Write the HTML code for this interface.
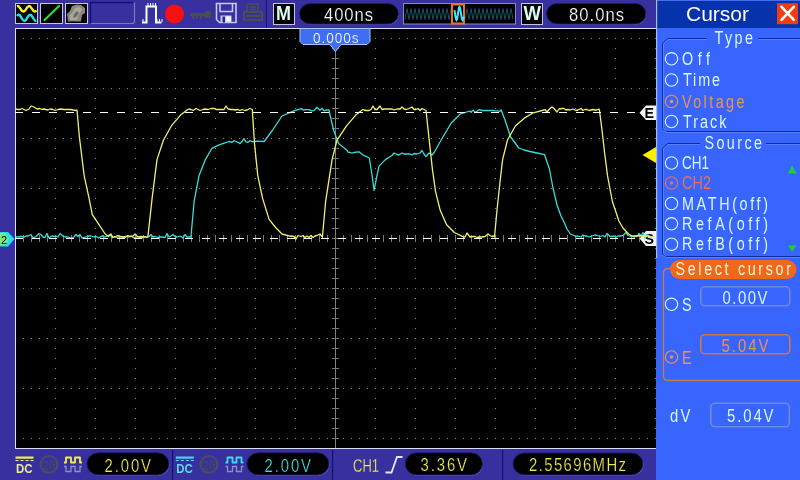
<!DOCTYPE html>
<html><head><meta charset="utf-8"><title>Scope</title>
<style>html,body{margin:0;padding:0;background:#000;}body{width:800px;height:480px;overflow:hidden;font-family:"Liberation Sans",sans-serif;}svg{display:block;}</style>
</head><body>
<svg style="will-change:transform" width="800" height="480" viewBox="0 0 800 480">
<rect x="0" y="0" width="656" height="480" fill="#37309e"/>
<rect x="15" y="28" width="641" height="421" fill="#000"/>
<rect x="15" y="28" width="641" height="1" fill="#dcdcff"/>
<rect x="15" y="448" width="641" height="1" fill="#dcdcff"/>
<rect x="15" y="28" width="1" height="421" fill="#dcdcff"/>
<path d="M23 38h1v1h-1zM31 38h1v1h-1zM39 38h1v1h-1zM47 38h1v1h-1zM55 38h1v1h-1zM63 38h1v1h-1zM71 38h1v1h-1zM79 38h1v1h-1zM87 38h1v1h-1zM95 38h1v1h-1zM103 38h1v1h-1zM111 38h1v1h-1zM119 38h1v1h-1zM127 38h1v1h-1zM135 38h1v1h-1zM143 38h1v1h-1zM151 38h1v1h-1zM159 38h1v1h-1zM167 38h1v1h-1zM175 38h1v1h-1zM183 38h1v1h-1zM191 38h1v1h-1zM199 38h1v1h-1zM207 38h1v1h-1zM215 38h1v1h-1zM223 38h1v1h-1zM231 38h1v1h-1zM239 38h1v1h-1zM247 38h1v1h-1zM255 38h1v1h-1zM263 38h1v1h-1zM271 38h1v1h-1zM279 38h1v1h-1zM287 38h1v1h-1zM295 38h1v1h-1zM303 38h1v1h-1zM311 38h1v1h-1zM319 38h1v1h-1zM327 38h1v1h-1zM335 38h1v1h-1zM343 38h1v1h-1zM351 38h1v1h-1zM359 38h1v1h-1zM367 38h1v1h-1zM375 38h1v1h-1zM383 38h1v1h-1zM391 38h1v1h-1zM399 38h1v1h-1zM407 38h1v1h-1zM415 38h1v1h-1zM423 38h1v1h-1zM431 38h1v1h-1zM439 38h1v1h-1zM447 38h1v1h-1zM455 38h1v1h-1zM463 38h1v1h-1zM471 38h1v1h-1zM479 38h1v1h-1zM487 38h1v1h-1zM495 38h1v1h-1zM503 38h1v1h-1zM511 38h1v1h-1zM519 38h1v1h-1zM527 38h1v1h-1zM535 38h1v1h-1zM543 38h1v1h-1zM551 38h1v1h-1zM559 38h1v1h-1zM567 38h1v1h-1zM575 38h1v1h-1zM583 38h1v1h-1zM591 38h1v1h-1zM599 38h1v1h-1zM607 38h1v1h-1zM615 38h1v1h-1zM623 38h1v1h-1zM631 38h1v1h-1zM639 38h1v1h-1zM647 38h1v1h-1zM655 38h1v1h-1zM23 88h1v1h-1zM31 88h1v1h-1zM39 88h1v1h-1zM47 88h1v1h-1zM55 88h1v1h-1zM63 88h1v1h-1zM71 88h1v1h-1zM79 88h1v1h-1zM87 88h1v1h-1zM95 88h1v1h-1zM103 88h1v1h-1zM111 88h1v1h-1zM119 88h1v1h-1zM127 88h1v1h-1zM135 88h1v1h-1zM143 88h1v1h-1zM151 88h1v1h-1zM159 88h1v1h-1zM167 88h1v1h-1zM175 88h1v1h-1zM183 88h1v1h-1zM191 88h1v1h-1zM199 88h1v1h-1zM207 88h1v1h-1zM215 88h1v1h-1zM223 88h1v1h-1zM231 88h1v1h-1zM239 88h1v1h-1zM247 88h1v1h-1zM255 88h1v1h-1zM263 88h1v1h-1zM271 88h1v1h-1zM279 88h1v1h-1zM287 88h1v1h-1zM295 88h1v1h-1zM303 88h1v1h-1zM311 88h1v1h-1zM319 88h1v1h-1zM327 88h1v1h-1zM335 88h1v1h-1zM343 88h1v1h-1zM351 88h1v1h-1zM359 88h1v1h-1zM367 88h1v1h-1zM375 88h1v1h-1zM383 88h1v1h-1zM391 88h1v1h-1zM399 88h1v1h-1zM407 88h1v1h-1zM415 88h1v1h-1zM423 88h1v1h-1zM431 88h1v1h-1zM439 88h1v1h-1zM447 88h1v1h-1zM455 88h1v1h-1zM463 88h1v1h-1zM471 88h1v1h-1zM479 88h1v1h-1zM487 88h1v1h-1zM495 88h1v1h-1zM503 88h1v1h-1zM511 88h1v1h-1zM519 88h1v1h-1zM527 88h1v1h-1zM535 88h1v1h-1zM543 88h1v1h-1zM551 88h1v1h-1zM559 88h1v1h-1zM567 88h1v1h-1zM575 88h1v1h-1zM583 88h1v1h-1zM591 88h1v1h-1zM599 88h1v1h-1zM607 88h1v1h-1zM615 88h1v1h-1zM623 88h1v1h-1zM631 88h1v1h-1zM639 88h1v1h-1zM647 88h1v1h-1zM655 88h1v1h-1zM23 138h1v1h-1zM31 138h1v1h-1zM39 138h1v1h-1zM47 138h1v1h-1zM55 138h1v1h-1zM63 138h1v1h-1zM71 138h1v1h-1zM79 138h1v1h-1zM87 138h1v1h-1zM95 138h1v1h-1zM103 138h1v1h-1zM111 138h1v1h-1zM119 138h1v1h-1zM127 138h1v1h-1zM135 138h1v1h-1zM143 138h1v1h-1zM151 138h1v1h-1zM159 138h1v1h-1zM167 138h1v1h-1zM175 138h1v1h-1zM183 138h1v1h-1zM191 138h1v1h-1zM199 138h1v1h-1zM207 138h1v1h-1zM215 138h1v1h-1zM223 138h1v1h-1zM231 138h1v1h-1zM239 138h1v1h-1zM247 138h1v1h-1zM255 138h1v1h-1zM263 138h1v1h-1zM271 138h1v1h-1zM279 138h1v1h-1zM287 138h1v1h-1zM295 138h1v1h-1zM303 138h1v1h-1zM311 138h1v1h-1zM319 138h1v1h-1zM327 138h1v1h-1zM335 138h1v1h-1zM343 138h1v1h-1zM351 138h1v1h-1zM359 138h1v1h-1zM367 138h1v1h-1zM375 138h1v1h-1zM383 138h1v1h-1zM391 138h1v1h-1zM399 138h1v1h-1zM407 138h1v1h-1zM415 138h1v1h-1zM423 138h1v1h-1zM431 138h1v1h-1zM439 138h1v1h-1zM447 138h1v1h-1zM455 138h1v1h-1zM463 138h1v1h-1zM471 138h1v1h-1zM479 138h1v1h-1zM487 138h1v1h-1zM495 138h1v1h-1zM503 138h1v1h-1zM511 138h1v1h-1zM519 138h1v1h-1zM527 138h1v1h-1zM535 138h1v1h-1zM543 138h1v1h-1zM551 138h1v1h-1zM559 138h1v1h-1zM567 138h1v1h-1zM575 138h1v1h-1zM583 138h1v1h-1zM591 138h1v1h-1zM599 138h1v1h-1zM607 138h1v1h-1zM615 138h1v1h-1zM623 138h1v1h-1zM631 138h1v1h-1zM639 138h1v1h-1zM647 138h1v1h-1zM655 138h1v1h-1zM23 188h1v1h-1zM31 188h1v1h-1zM39 188h1v1h-1zM47 188h1v1h-1zM55 188h1v1h-1zM63 188h1v1h-1zM71 188h1v1h-1zM79 188h1v1h-1zM87 188h1v1h-1zM95 188h1v1h-1zM103 188h1v1h-1zM111 188h1v1h-1zM119 188h1v1h-1zM127 188h1v1h-1zM135 188h1v1h-1zM143 188h1v1h-1zM151 188h1v1h-1zM159 188h1v1h-1zM167 188h1v1h-1zM175 188h1v1h-1zM183 188h1v1h-1zM191 188h1v1h-1zM199 188h1v1h-1zM207 188h1v1h-1zM215 188h1v1h-1zM223 188h1v1h-1zM231 188h1v1h-1zM239 188h1v1h-1zM247 188h1v1h-1zM255 188h1v1h-1zM263 188h1v1h-1zM271 188h1v1h-1zM279 188h1v1h-1zM287 188h1v1h-1zM295 188h1v1h-1zM303 188h1v1h-1zM311 188h1v1h-1zM319 188h1v1h-1zM327 188h1v1h-1zM335 188h1v1h-1zM343 188h1v1h-1zM351 188h1v1h-1zM359 188h1v1h-1zM367 188h1v1h-1zM375 188h1v1h-1zM383 188h1v1h-1zM391 188h1v1h-1zM399 188h1v1h-1zM407 188h1v1h-1zM415 188h1v1h-1zM423 188h1v1h-1zM431 188h1v1h-1zM439 188h1v1h-1zM447 188h1v1h-1zM455 188h1v1h-1zM463 188h1v1h-1zM471 188h1v1h-1zM479 188h1v1h-1zM487 188h1v1h-1zM495 188h1v1h-1zM503 188h1v1h-1zM511 188h1v1h-1zM519 188h1v1h-1zM527 188h1v1h-1zM535 188h1v1h-1zM543 188h1v1h-1zM551 188h1v1h-1zM559 188h1v1h-1zM567 188h1v1h-1zM575 188h1v1h-1zM583 188h1v1h-1zM591 188h1v1h-1zM599 188h1v1h-1zM607 188h1v1h-1zM615 188h1v1h-1zM623 188h1v1h-1zM631 188h1v1h-1zM639 188h1v1h-1zM647 188h1v1h-1zM655 188h1v1h-1zM23 288h1v1h-1zM31 288h1v1h-1zM39 288h1v1h-1zM47 288h1v1h-1zM55 288h1v1h-1zM63 288h1v1h-1zM71 288h1v1h-1zM79 288h1v1h-1zM87 288h1v1h-1zM95 288h1v1h-1zM103 288h1v1h-1zM111 288h1v1h-1zM119 288h1v1h-1zM127 288h1v1h-1zM135 288h1v1h-1zM143 288h1v1h-1zM151 288h1v1h-1zM159 288h1v1h-1zM167 288h1v1h-1zM175 288h1v1h-1zM183 288h1v1h-1zM191 288h1v1h-1zM199 288h1v1h-1zM207 288h1v1h-1zM215 288h1v1h-1zM223 288h1v1h-1zM231 288h1v1h-1zM239 288h1v1h-1zM247 288h1v1h-1zM255 288h1v1h-1zM263 288h1v1h-1zM271 288h1v1h-1zM279 288h1v1h-1zM287 288h1v1h-1zM295 288h1v1h-1zM303 288h1v1h-1zM311 288h1v1h-1zM319 288h1v1h-1zM327 288h1v1h-1zM335 288h1v1h-1zM343 288h1v1h-1zM351 288h1v1h-1zM359 288h1v1h-1zM367 288h1v1h-1zM375 288h1v1h-1zM383 288h1v1h-1zM391 288h1v1h-1zM399 288h1v1h-1zM407 288h1v1h-1zM415 288h1v1h-1zM423 288h1v1h-1zM431 288h1v1h-1zM439 288h1v1h-1zM447 288h1v1h-1zM455 288h1v1h-1zM463 288h1v1h-1zM471 288h1v1h-1zM479 288h1v1h-1zM487 288h1v1h-1zM495 288h1v1h-1zM503 288h1v1h-1zM511 288h1v1h-1zM519 288h1v1h-1zM527 288h1v1h-1zM535 288h1v1h-1zM543 288h1v1h-1zM551 288h1v1h-1zM559 288h1v1h-1zM567 288h1v1h-1zM575 288h1v1h-1zM583 288h1v1h-1zM591 288h1v1h-1zM599 288h1v1h-1zM607 288h1v1h-1zM615 288h1v1h-1zM623 288h1v1h-1zM631 288h1v1h-1zM639 288h1v1h-1zM647 288h1v1h-1zM655 288h1v1h-1zM23 338h1v1h-1zM31 338h1v1h-1zM39 338h1v1h-1zM47 338h1v1h-1zM55 338h1v1h-1zM63 338h1v1h-1zM71 338h1v1h-1zM79 338h1v1h-1zM87 338h1v1h-1zM95 338h1v1h-1zM103 338h1v1h-1zM111 338h1v1h-1zM119 338h1v1h-1zM127 338h1v1h-1zM135 338h1v1h-1zM143 338h1v1h-1zM151 338h1v1h-1zM159 338h1v1h-1zM167 338h1v1h-1zM175 338h1v1h-1zM183 338h1v1h-1zM191 338h1v1h-1zM199 338h1v1h-1zM207 338h1v1h-1zM215 338h1v1h-1zM223 338h1v1h-1zM231 338h1v1h-1zM239 338h1v1h-1zM247 338h1v1h-1zM255 338h1v1h-1zM263 338h1v1h-1zM271 338h1v1h-1zM279 338h1v1h-1zM287 338h1v1h-1zM295 338h1v1h-1zM303 338h1v1h-1zM311 338h1v1h-1zM319 338h1v1h-1zM327 338h1v1h-1zM335 338h1v1h-1zM343 338h1v1h-1zM351 338h1v1h-1zM359 338h1v1h-1zM367 338h1v1h-1zM375 338h1v1h-1zM383 338h1v1h-1zM391 338h1v1h-1zM399 338h1v1h-1zM407 338h1v1h-1zM415 338h1v1h-1zM423 338h1v1h-1zM431 338h1v1h-1zM439 338h1v1h-1zM447 338h1v1h-1zM455 338h1v1h-1zM463 338h1v1h-1zM471 338h1v1h-1zM479 338h1v1h-1zM487 338h1v1h-1zM495 338h1v1h-1zM503 338h1v1h-1zM511 338h1v1h-1zM519 338h1v1h-1zM527 338h1v1h-1zM535 338h1v1h-1zM543 338h1v1h-1zM551 338h1v1h-1zM559 338h1v1h-1zM567 338h1v1h-1zM575 338h1v1h-1zM583 338h1v1h-1zM591 338h1v1h-1zM599 338h1v1h-1zM607 338h1v1h-1zM615 338h1v1h-1zM623 338h1v1h-1zM631 338h1v1h-1zM639 338h1v1h-1zM647 338h1v1h-1zM655 338h1v1h-1zM23 388h1v1h-1zM31 388h1v1h-1zM39 388h1v1h-1zM47 388h1v1h-1zM55 388h1v1h-1zM63 388h1v1h-1zM71 388h1v1h-1zM79 388h1v1h-1zM87 388h1v1h-1zM95 388h1v1h-1zM103 388h1v1h-1zM111 388h1v1h-1zM119 388h1v1h-1zM127 388h1v1h-1zM135 388h1v1h-1zM143 388h1v1h-1zM151 388h1v1h-1zM159 388h1v1h-1zM167 388h1v1h-1zM175 388h1v1h-1zM183 388h1v1h-1zM191 388h1v1h-1zM199 388h1v1h-1zM207 388h1v1h-1zM215 388h1v1h-1zM223 388h1v1h-1zM231 388h1v1h-1zM239 388h1v1h-1zM247 388h1v1h-1zM255 388h1v1h-1zM263 388h1v1h-1zM271 388h1v1h-1zM279 388h1v1h-1zM287 388h1v1h-1zM295 388h1v1h-1zM303 388h1v1h-1zM311 388h1v1h-1zM319 388h1v1h-1zM327 388h1v1h-1zM335 388h1v1h-1zM343 388h1v1h-1zM351 388h1v1h-1zM359 388h1v1h-1zM367 388h1v1h-1zM375 388h1v1h-1zM383 388h1v1h-1zM391 388h1v1h-1zM399 388h1v1h-1zM407 388h1v1h-1zM415 388h1v1h-1zM423 388h1v1h-1zM431 388h1v1h-1zM439 388h1v1h-1zM447 388h1v1h-1zM455 388h1v1h-1zM463 388h1v1h-1zM471 388h1v1h-1zM479 388h1v1h-1zM487 388h1v1h-1zM495 388h1v1h-1zM503 388h1v1h-1zM511 388h1v1h-1zM519 388h1v1h-1zM527 388h1v1h-1zM535 388h1v1h-1zM543 388h1v1h-1zM551 388h1v1h-1zM559 388h1v1h-1zM567 388h1v1h-1zM575 388h1v1h-1zM583 388h1v1h-1zM591 388h1v1h-1zM599 388h1v1h-1zM607 388h1v1h-1zM615 388h1v1h-1zM623 388h1v1h-1zM631 388h1v1h-1zM639 388h1v1h-1zM647 388h1v1h-1zM655 388h1v1h-1zM23 438h1v1h-1zM31 438h1v1h-1zM39 438h1v1h-1zM47 438h1v1h-1zM55 438h1v1h-1zM63 438h1v1h-1zM71 438h1v1h-1zM79 438h1v1h-1zM87 438h1v1h-1zM95 438h1v1h-1zM103 438h1v1h-1zM111 438h1v1h-1zM119 438h1v1h-1zM127 438h1v1h-1zM135 438h1v1h-1zM143 438h1v1h-1zM151 438h1v1h-1zM159 438h1v1h-1zM167 438h1v1h-1zM175 438h1v1h-1zM183 438h1v1h-1zM191 438h1v1h-1zM199 438h1v1h-1zM207 438h1v1h-1zM215 438h1v1h-1zM223 438h1v1h-1zM231 438h1v1h-1zM239 438h1v1h-1zM247 438h1v1h-1zM255 438h1v1h-1zM263 438h1v1h-1zM271 438h1v1h-1zM279 438h1v1h-1zM287 438h1v1h-1zM295 438h1v1h-1zM303 438h1v1h-1zM311 438h1v1h-1zM319 438h1v1h-1zM327 438h1v1h-1zM335 438h1v1h-1zM343 438h1v1h-1zM351 438h1v1h-1zM359 438h1v1h-1zM367 438h1v1h-1zM375 438h1v1h-1zM383 438h1v1h-1zM391 438h1v1h-1zM399 438h1v1h-1zM407 438h1v1h-1zM415 438h1v1h-1zM423 438h1v1h-1zM431 438h1v1h-1zM439 438h1v1h-1zM447 438h1v1h-1zM455 438h1v1h-1zM463 438h1v1h-1zM471 438h1v1h-1zM479 438h1v1h-1zM487 438h1v1h-1zM495 438h1v1h-1zM503 438h1v1h-1zM511 438h1v1h-1zM519 438h1v1h-1zM527 438h1v1h-1zM535 438h1v1h-1zM543 438h1v1h-1zM551 438h1v1h-1zM559 438h1v1h-1zM567 438h1v1h-1zM575 438h1v1h-1zM583 438h1v1h-1zM591 438h1v1h-1zM599 438h1v1h-1zM607 438h1v1h-1zM615 438h1v1h-1zM623 438h1v1h-1zM631 438h1v1h-1zM639 438h1v1h-1zM647 438h1v1h-1zM655 438h1v1h-1zM55 48h1v1h-1zM55 58h1v1h-1zM55 68h1v1h-1zM55 78h1v1h-1zM55 98h1v1h-1zM55 108h1v1h-1zM55 118h1v1h-1zM55 128h1v1h-1zM55 148h1v1h-1zM55 158h1v1h-1zM55 168h1v1h-1zM55 178h1v1h-1zM55 198h1v1h-1zM55 208h1v1h-1zM55 218h1v1h-1zM55 228h1v1h-1zM55 248h1v1h-1zM55 258h1v1h-1zM55 268h1v1h-1zM55 278h1v1h-1zM55 298h1v1h-1zM55 308h1v1h-1zM55 318h1v1h-1zM55 328h1v1h-1zM55 348h1v1h-1zM55 358h1v1h-1zM55 368h1v1h-1zM55 378h1v1h-1zM55 398h1v1h-1zM55 408h1v1h-1zM55 418h1v1h-1zM55 428h1v1h-1zM95 48h1v1h-1zM95 58h1v1h-1zM95 68h1v1h-1zM95 78h1v1h-1zM95 98h1v1h-1zM95 108h1v1h-1zM95 118h1v1h-1zM95 128h1v1h-1zM95 148h1v1h-1zM95 158h1v1h-1zM95 168h1v1h-1zM95 178h1v1h-1zM95 198h1v1h-1zM95 208h1v1h-1zM95 218h1v1h-1zM95 228h1v1h-1zM95 248h1v1h-1zM95 258h1v1h-1zM95 268h1v1h-1zM95 278h1v1h-1zM95 298h1v1h-1zM95 308h1v1h-1zM95 318h1v1h-1zM95 328h1v1h-1zM95 348h1v1h-1zM95 358h1v1h-1zM95 368h1v1h-1zM95 378h1v1h-1zM95 398h1v1h-1zM95 408h1v1h-1zM95 418h1v1h-1zM95 428h1v1h-1zM135 48h1v1h-1zM135 58h1v1h-1zM135 68h1v1h-1zM135 78h1v1h-1zM135 98h1v1h-1zM135 108h1v1h-1zM135 118h1v1h-1zM135 128h1v1h-1zM135 148h1v1h-1zM135 158h1v1h-1zM135 168h1v1h-1zM135 178h1v1h-1zM135 198h1v1h-1zM135 208h1v1h-1zM135 218h1v1h-1zM135 228h1v1h-1zM135 248h1v1h-1zM135 258h1v1h-1zM135 268h1v1h-1zM135 278h1v1h-1zM135 298h1v1h-1zM135 308h1v1h-1zM135 318h1v1h-1zM135 328h1v1h-1zM135 348h1v1h-1zM135 358h1v1h-1zM135 368h1v1h-1zM135 378h1v1h-1zM135 398h1v1h-1zM135 408h1v1h-1zM135 418h1v1h-1zM135 428h1v1h-1zM175 48h1v1h-1zM175 58h1v1h-1zM175 68h1v1h-1zM175 78h1v1h-1zM175 98h1v1h-1zM175 108h1v1h-1zM175 118h1v1h-1zM175 128h1v1h-1zM175 148h1v1h-1zM175 158h1v1h-1zM175 168h1v1h-1zM175 178h1v1h-1zM175 198h1v1h-1zM175 208h1v1h-1zM175 218h1v1h-1zM175 228h1v1h-1zM175 248h1v1h-1zM175 258h1v1h-1zM175 268h1v1h-1zM175 278h1v1h-1zM175 298h1v1h-1zM175 308h1v1h-1zM175 318h1v1h-1zM175 328h1v1h-1zM175 348h1v1h-1zM175 358h1v1h-1zM175 368h1v1h-1zM175 378h1v1h-1zM175 398h1v1h-1zM175 408h1v1h-1zM175 418h1v1h-1zM175 428h1v1h-1zM215 48h1v1h-1zM215 58h1v1h-1zM215 68h1v1h-1zM215 78h1v1h-1zM215 98h1v1h-1zM215 108h1v1h-1zM215 118h1v1h-1zM215 128h1v1h-1zM215 148h1v1h-1zM215 158h1v1h-1zM215 168h1v1h-1zM215 178h1v1h-1zM215 198h1v1h-1zM215 208h1v1h-1zM215 218h1v1h-1zM215 228h1v1h-1zM215 248h1v1h-1zM215 258h1v1h-1zM215 268h1v1h-1zM215 278h1v1h-1zM215 298h1v1h-1zM215 308h1v1h-1zM215 318h1v1h-1zM215 328h1v1h-1zM215 348h1v1h-1zM215 358h1v1h-1zM215 368h1v1h-1zM215 378h1v1h-1zM215 398h1v1h-1zM215 408h1v1h-1zM215 418h1v1h-1zM215 428h1v1h-1zM255 48h1v1h-1zM255 58h1v1h-1zM255 68h1v1h-1zM255 78h1v1h-1zM255 98h1v1h-1zM255 108h1v1h-1zM255 118h1v1h-1zM255 128h1v1h-1zM255 148h1v1h-1zM255 158h1v1h-1zM255 168h1v1h-1zM255 178h1v1h-1zM255 198h1v1h-1zM255 208h1v1h-1zM255 218h1v1h-1zM255 228h1v1h-1zM255 248h1v1h-1zM255 258h1v1h-1zM255 268h1v1h-1zM255 278h1v1h-1zM255 298h1v1h-1zM255 308h1v1h-1zM255 318h1v1h-1zM255 328h1v1h-1zM255 348h1v1h-1zM255 358h1v1h-1zM255 368h1v1h-1zM255 378h1v1h-1zM255 398h1v1h-1zM255 408h1v1h-1zM255 418h1v1h-1zM255 428h1v1h-1zM295 48h1v1h-1zM295 58h1v1h-1zM295 68h1v1h-1zM295 78h1v1h-1zM295 98h1v1h-1zM295 108h1v1h-1zM295 118h1v1h-1zM295 128h1v1h-1zM295 148h1v1h-1zM295 158h1v1h-1zM295 168h1v1h-1zM295 178h1v1h-1zM295 198h1v1h-1zM295 208h1v1h-1zM295 218h1v1h-1zM295 228h1v1h-1zM295 248h1v1h-1zM295 258h1v1h-1zM295 268h1v1h-1zM295 278h1v1h-1zM295 298h1v1h-1zM295 308h1v1h-1zM295 318h1v1h-1zM295 328h1v1h-1zM295 348h1v1h-1zM295 358h1v1h-1zM295 368h1v1h-1zM295 378h1v1h-1zM295 398h1v1h-1zM295 408h1v1h-1zM295 418h1v1h-1zM295 428h1v1h-1zM375 48h1v1h-1zM375 58h1v1h-1zM375 68h1v1h-1zM375 78h1v1h-1zM375 98h1v1h-1zM375 108h1v1h-1zM375 118h1v1h-1zM375 128h1v1h-1zM375 148h1v1h-1zM375 158h1v1h-1zM375 168h1v1h-1zM375 178h1v1h-1zM375 198h1v1h-1zM375 208h1v1h-1zM375 218h1v1h-1zM375 228h1v1h-1zM375 248h1v1h-1zM375 258h1v1h-1zM375 268h1v1h-1zM375 278h1v1h-1zM375 298h1v1h-1zM375 308h1v1h-1zM375 318h1v1h-1zM375 328h1v1h-1zM375 348h1v1h-1zM375 358h1v1h-1zM375 368h1v1h-1zM375 378h1v1h-1zM375 398h1v1h-1zM375 408h1v1h-1zM375 418h1v1h-1zM375 428h1v1h-1zM415 48h1v1h-1zM415 58h1v1h-1zM415 68h1v1h-1zM415 78h1v1h-1zM415 98h1v1h-1zM415 108h1v1h-1zM415 118h1v1h-1zM415 128h1v1h-1zM415 148h1v1h-1zM415 158h1v1h-1zM415 168h1v1h-1zM415 178h1v1h-1zM415 198h1v1h-1zM415 208h1v1h-1zM415 218h1v1h-1zM415 228h1v1h-1zM415 248h1v1h-1zM415 258h1v1h-1zM415 268h1v1h-1zM415 278h1v1h-1zM415 298h1v1h-1zM415 308h1v1h-1zM415 318h1v1h-1zM415 328h1v1h-1zM415 348h1v1h-1zM415 358h1v1h-1zM415 368h1v1h-1zM415 378h1v1h-1zM415 398h1v1h-1zM415 408h1v1h-1zM415 418h1v1h-1zM415 428h1v1h-1zM455 48h1v1h-1zM455 58h1v1h-1zM455 68h1v1h-1zM455 78h1v1h-1zM455 98h1v1h-1zM455 108h1v1h-1zM455 118h1v1h-1zM455 128h1v1h-1zM455 148h1v1h-1zM455 158h1v1h-1zM455 168h1v1h-1zM455 178h1v1h-1zM455 198h1v1h-1zM455 208h1v1h-1zM455 218h1v1h-1zM455 228h1v1h-1zM455 248h1v1h-1zM455 258h1v1h-1zM455 268h1v1h-1zM455 278h1v1h-1zM455 298h1v1h-1zM455 308h1v1h-1zM455 318h1v1h-1zM455 328h1v1h-1zM455 348h1v1h-1zM455 358h1v1h-1zM455 368h1v1h-1zM455 378h1v1h-1zM455 398h1v1h-1zM455 408h1v1h-1zM455 418h1v1h-1zM455 428h1v1h-1zM495 48h1v1h-1zM495 58h1v1h-1zM495 68h1v1h-1zM495 78h1v1h-1zM495 98h1v1h-1zM495 108h1v1h-1zM495 118h1v1h-1zM495 128h1v1h-1zM495 148h1v1h-1zM495 158h1v1h-1zM495 168h1v1h-1zM495 178h1v1h-1zM495 198h1v1h-1zM495 208h1v1h-1zM495 218h1v1h-1zM495 228h1v1h-1zM495 248h1v1h-1zM495 258h1v1h-1zM495 268h1v1h-1zM495 278h1v1h-1zM495 298h1v1h-1zM495 308h1v1h-1zM495 318h1v1h-1zM495 328h1v1h-1zM495 348h1v1h-1zM495 358h1v1h-1zM495 368h1v1h-1zM495 378h1v1h-1zM495 398h1v1h-1zM495 408h1v1h-1zM495 418h1v1h-1zM495 428h1v1h-1zM535 48h1v1h-1zM535 58h1v1h-1zM535 68h1v1h-1zM535 78h1v1h-1zM535 98h1v1h-1zM535 108h1v1h-1zM535 118h1v1h-1zM535 128h1v1h-1zM535 148h1v1h-1zM535 158h1v1h-1zM535 168h1v1h-1zM535 178h1v1h-1zM535 198h1v1h-1zM535 208h1v1h-1zM535 218h1v1h-1zM535 228h1v1h-1zM535 248h1v1h-1zM535 258h1v1h-1zM535 268h1v1h-1zM535 278h1v1h-1zM535 298h1v1h-1zM535 308h1v1h-1zM535 318h1v1h-1zM535 328h1v1h-1zM535 348h1v1h-1zM535 358h1v1h-1zM535 368h1v1h-1zM535 378h1v1h-1zM535 398h1v1h-1zM535 408h1v1h-1zM535 418h1v1h-1zM535 428h1v1h-1zM575 48h1v1h-1zM575 58h1v1h-1zM575 68h1v1h-1zM575 78h1v1h-1zM575 98h1v1h-1zM575 108h1v1h-1zM575 118h1v1h-1zM575 128h1v1h-1zM575 148h1v1h-1zM575 158h1v1h-1zM575 168h1v1h-1zM575 178h1v1h-1zM575 198h1v1h-1zM575 208h1v1h-1zM575 218h1v1h-1zM575 228h1v1h-1zM575 248h1v1h-1zM575 258h1v1h-1zM575 268h1v1h-1zM575 278h1v1h-1zM575 298h1v1h-1zM575 308h1v1h-1zM575 318h1v1h-1zM575 328h1v1h-1zM575 348h1v1h-1zM575 358h1v1h-1zM575 368h1v1h-1zM575 378h1v1h-1zM575 398h1v1h-1zM575 408h1v1h-1zM575 418h1v1h-1zM575 428h1v1h-1zM615 48h1v1h-1zM615 58h1v1h-1zM615 68h1v1h-1zM615 78h1v1h-1zM615 98h1v1h-1zM615 108h1v1h-1zM615 118h1v1h-1zM615 128h1v1h-1zM615 148h1v1h-1zM615 158h1v1h-1zM615 168h1v1h-1zM615 178h1v1h-1zM615 198h1v1h-1zM615 208h1v1h-1zM615 218h1v1h-1zM615 228h1v1h-1zM615 248h1v1h-1zM615 258h1v1h-1zM615 268h1v1h-1zM615 278h1v1h-1zM615 298h1v1h-1zM615 308h1v1h-1zM615 318h1v1h-1zM615 328h1v1h-1zM615 348h1v1h-1zM615 358h1v1h-1zM615 368h1v1h-1zM615 378h1v1h-1zM615 398h1v1h-1zM615 408h1v1h-1zM615 418h1v1h-1zM615 428h1v1h-1zM655 48h1v1h-1zM655 58h1v1h-1zM655 68h1v1h-1zM655 78h1v1h-1zM655 98h1v1h-1zM655 108h1v1h-1zM655 118h1v1h-1zM655 128h1v1h-1zM655 148h1v1h-1zM655 158h1v1h-1zM655 168h1v1h-1zM655 178h1v1h-1zM655 198h1v1h-1zM655 208h1v1h-1zM655 218h1v1h-1zM655 228h1v1h-1zM655 248h1v1h-1zM655 258h1v1h-1zM655 268h1v1h-1zM655 278h1v1h-1zM655 298h1v1h-1zM655 308h1v1h-1zM655 318h1v1h-1zM655 328h1v1h-1zM655 348h1v1h-1zM655 358h1v1h-1zM655 368h1v1h-1zM655 378h1v1h-1zM655 398h1v1h-1zM655 408h1v1h-1zM655 418h1v1h-1zM655 428h1v1h-1z" fill="#8a8a8a"/>
<rect x="335" y="29" width="1" height="419" fill="#808080"/>
<path d="M332 38h7v1h-7zM332 48h7v1h-7zM332 58h7v1h-7zM332 68h7v1h-7zM332 78h7v1h-7zM332 88h7v1h-7zM332 98h7v1h-7zM332 108h7v1h-7zM332 118h7v1h-7zM332 128h7v1h-7zM332 138h7v1h-7zM332 148h7v1h-7zM332 158h7v1h-7zM332 168h7v1h-7zM332 178h7v1h-7zM332 188h7v1h-7zM332 198h7v1h-7zM332 208h7v1h-7zM332 218h7v1h-7zM332 228h7v1h-7zM332 238h7v1h-7zM332 248h7v1h-7zM332 258h7v1h-7zM332 268h7v1h-7zM332 278h7v1h-7zM332 288h7v1h-7zM332 298h7v1h-7zM332 308h7v1h-7zM332 318h7v1h-7zM332 328h7v1h-7zM332 338h7v1h-7zM332 348h7v1h-7zM332 358h7v1h-7zM332 368h7v1h-7zM332 378h7v1h-7zM332 388h7v1h-7zM332 398h7v1h-7zM332 408h7v1h-7zM332 418h7v1h-7zM332 428h7v1h-7zM332 438h7v1h-7zM23 235h1v7h-1zM31 235h1v7h-1zM39 235h1v7h-1zM47 235h1v7h-1zM55 235h1v7h-1zM63 235h1v7h-1zM71 235h1v7h-1zM79 235h1v7h-1zM87 235h1v7h-1zM95 235h1v7h-1zM103 235h1v7h-1zM111 235h1v7h-1zM119 235h1v7h-1zM127 235h1v7h-1zM135 235h1v7h-1zM143 235h1v7h-1zM151 235h1v7h-1zM159 235h1v7h-1zM167 235h1v7h-1zM175 235h1v7h-1zM183 235h1v7h-1zM191 235h1v7h-1zM199 235h1v7h-1zM207 235h1v7h-1zM215 235h1v7h-1zM223 235h1v7h-1zM231 235h1v7h-1zM239 235h1v7h-1zM247 235h1v7h-1zM255 235h1v7h-1zM263 235h1v7h-1zM271 235h1v7h-1zM279 235h1v7h-1zM287 235h1v7h-1zM295 235h1v7h-1zM303 235h1v7h-1zM311 235h1v7h-1zM319 235h1v7h-1zM327 235h1v7h-1zM335 235h1v7h-1zM343 235h1v7h-1zM351 235h1v7h-1zM359 235h1v7h-1zM367 235h1v7h-1zM375 235h1v7h-1zM383 235h1v7h-1zM391 235h1v7h-1zM399 235h1v7h-1zM407 235h1v7h-1zM415 235h1v7h-1zM423 235h1v7h-1zM431 235h1v7h-1zM439 235h1v7h-1zM447 235h1v7h-1zM455 235h1v7h-1zM463 235h1v7h-1zM471 235h1v7h-1zM479 235h1v7h-1zM487 235h1v7h-1zM495 235h1v7h-1zM503 235h1v7h-1zM511 235h1v7h-1zM519 235h1v7h-1zM527 235h1v7h-1zM535 235h1v7h-1zM543 235h1v7h-1zM551 235h1v7h-1zM559 235h1v7h-1zM567 235h1v7h-1zM575 235h1v7h-1zM583 235h1v7h-1zM591 235h1v7h-1zM599 235h1v7h-1zM607 235h1v7h-1zM615 235h1v7h-1zM623 235h1v7h-1zM631 235h1v7h-1zM639 235h1v7h-1zM647 235h1v7h-1zM655 235h1v7h-1z" fill="#7a7a7a"/>
<path d="M639.5 238.5L646 231H656V246H646Z" fill="#f4f4f4"/>
<text x="644.5" y="244" font-family="Liberation Sans" font-size="14.5" font-weight="bold" fill="#000" opacity="0.995" textLength="9.5" lengthAdjust="spacingAndGlyphs">S</text>
<clipPath id="scr"><rect x="16" y="29" width="640" height="419"/></clipPath>
<g clip-path="url(#scr)" fill="none" stroke-width="1.3" stroke-linejoin="round">
<polyline points="16.0,237.0 18.0,237.0 21.0,236.5 24.0,237.0 26.0,236.0 28.0,236.0 31.0,234.5 33.0,238.0 36.0,236.5 39.0,233.5 41.0,234.5 43.0,237.0 45.0,237.5 47.0,233.5 49.0,238.0 52.0,236.0 54.0,236.5 56.0,236.0 58.0,237.0 60.0,233.5 63.0,236.0 65.0,237.0 68.0,237.0 71.0,238.0 74.0,237.0 76.0,234.5 78.0,236.5 80.0,234.5 82.0,238.0 84.0,237.5 87.0,236.5 89.0,236.0 91.0,236.0 94.0,237.0 96.0,236.5 99.0,238.0 101.0,236.5 103.0,236.0 105.0,237.0 107.0,236.0 110.0,234.5 112.0,237.5 115.0,237.0 117.0,237.0 119.0,237.0 122.0,236.5 124.0,238.0 127.0,236.5 129.0,237.0 131.0,236.0 133.0,237.5 135.0,238.0 137.0,237.0 140.0,237.0 142.0,238.0 144.0,236.5 147.0,237.5 149.0,236.5 151.0,234.5 153.0,237.0 155.0,236.5 158.0,237.5 160.0,237.0 162.0,237.0 165.0,237.5 167.0,233.5 169.0,237.0 171.0,236.0 173.0,234.5 175.0,236.5 177.0,237.0 180.0,236.0 183.0,238.0 185.0,234.5 187.0,237.0 189.0,237.0 190.9,237.2 194.1,201.7 199.0,175.8 205.4,159.6 211.9,148.3 218.4,145.1 228.0,141.9 229.0,141.5 232.0,142.3 234.0,140.7 236.0,141.5 238.0,142.3 240.0,143.6 242.0,141.5 244.0,138.6 246.0,141.9 248.0,142.3 250.0,140.7 253.0,141.9 255.0,141.5 257.0,141.1 264.2,141.5 272.3,130.5 282.0,116.0 293.3,111.2 301.4,108.6 303.0,110.0 306.0,109.6 309.0,109.6 312.0,110.8 314.0,110.4 317.0,107.3 320.0,110.4 322.0,108.1 324.0,110.8 326.0,110.0 328.9,110.0 333.7,130.5 338.6,143.5 346.7,150.0 348.0,152.1 350.0,152.5 352.0,153.2 354.0,152.5 356.0,152.1 359.0,151.8 362.8,154.8 369.3,158.0 372.0,175.0 374.1,190.3 376.5,178.0 379.0,166.1 385.4,159.6 392.0,155.5 394.0,153.0 397.0,154.5 399.0,155.0 402.0,153.0 404.0,154.0 406.0,154.0 408.0,154.0 410.0,154.0 412.0,155.0 414.0,153.5 417.0,154.0 420.0,153.0 422.0,150.5 424.0,154.0 426.0,156.5 429.0,153.0 432.0,155.0 434.0,152.8 441.9,138.8 451.2,123.0 460.6,113.8 470.0,111.0 471.0,112.4 473.0,110.1 475.0,112.4 477.0,111.3 479.0,109.7 482.0,110.5 484.0,110.5 486.0,110.5 488.0,110.5 491.0,110.5 493.0,110.5 495.0,110.9 497.0,110.9 500.0,111.3 501.2,110.0 505.0,120.0 510.7,137.0 518.8,148.0 524.0,150.0 530.0,151.5 537.0,153.0 544.6,154.7 549.4,169.0 553.0,188.0 557.0,205.0 561.0,216.0 564.0,222.0 567.0,229.0 570.4,234.0 576.0,236.5 578.0,236.0 581.0,237.0 583.0,235.0 585.0,236.0 587.0,236.0 589.0,237.0 592.0,236.0 595.0,235.0 597.0,235.5 600.0,236.5 603.0,235.5 605.0,237.0 607.0,233.5 610.0,236.5 612.0,236.5 614.0,236.0 616.0,237.0 618.0,236.0 620.0,236.0 623.0,235.5 626.0,232.5 628.0,235.5 631.0,236.5 633.0,236.0 635.0,236.0 637.0,236.5 639.0,233.5 641.0,236.0 643.0,232.5 645.0,238.5 647.0,235.0 650.0,237.0 652.0,237.0" stroke="#38dcdc"/>
<polyline points="16.0,109.0 18.0,109.5 20.0,109.5 22.0,108.5 24.0,109.5 26.0,110.5 29.0,109.0 31.0,106.0 34.0,107.0 37.0,109.0 40.0,108.5 42.0,109.5 44.0,109.0 46.0,109.5 48.0,110.0 50.0,109.0 53.0,109.5 55.0,110.5 58.0,109.5 61.0,109.0 64.0,109.5 67.0,109.5 69.0,109.5 71.0,109.5 73.0,110.0 76.0,110.5 77.0,110.0 79.4,137.0 84.2,175.8 89.1,198.4 92.3,214.6 98.8,224.3 105.2,234.0 108.5,236.6 111.0,234.0 113.0,237.5 115.0,236.5 118.0,235.5 120.0,236.5 123.0,237.0 126.0,236.5 128.0,235.5 130.0,236.5 133.0,236.0 135.0,234.0 137.0,236.0 139.0,237.0 141.0,236.5 144.0,237.0 146.0,237.0 147.9,236.6 152.1,198.4 157.0,159.6 163.4,140.2 171.5,125.7 181.2,114.4 187.7,109.5 189.0,109.0 191.0,109.5 193.0,110.5 196.0,108.5 198.0,109.5 200.0,110.5 203.0,109.5 205.0,109.0 208.0,109.5 211.0,108.5 214.0,108.5 216.0,109.5 219.0,109.5 221.0,109.5 224.0,109.5 226.0,106.0 228.0,109.0 231.0,109.5 233.0,109.5 235.0,110.0 238.0,109.5 240.0,110.5 242.0,109.5 245.0,110.5 247.0,110.0 250.0,108.5 252.3,109.5 254.5,143.5 257.8,175.8 262.6,198.4 269.1,219.4 275.6,227.5 282.0,234.0 291.7,236.6 291.0,236.0 294.0,236.5 296.0,239.0 298.0,235.5 301.0,236.5 303.0,235.5 305.0,237.5 307.0,236.0 309.0,237.5 311.0,235.5 313.0,237.5 315.0,236.0 317.0,235.5 320.0,234.0 322.4,237.2 325.6,201.7 332.1,159.6 337.0,140.2 346.7,125.7 356.4,114.4 362.8,109.5 364.0,110.0 366.0,110.5 369.0,110.5 371.0,109.5 373.0,106.0 375.0,109.5 377.0,109.5 380.0,106.0 382.0,109.5 384.0,109.0 386.0,109.0 388.0,109.0 390.0,109.0 392.0,109.0 394.0,110.0 397.0,109.0 400.0,109.0 402.0,107.0 404.0,109.0 406.0,109.5 409.0,108.5 412.0,107.0 414.0,109.5 416.0,109.5 418.0,108.5 420.0,110.5 422.0,108.5 424.0,109.5 426.0,110.5 429.4,141.9 432.5,170.0 435.6,191.9 440.3,210.6 446.6,224.7 454.4,232.5 463.8,237.2 465.0,237.0 467.0,233.0 470.0,237.0 473.0,236.5 475.0,236.5 477.0,237.5 480.0,237.0 482.0,237.0 485.0,236.5 488.0,234.0 490.0,235.5 492.0,236.5 494.0,236.0 494.5,237.0 497.0,210.0 500.0,182.0 502.6,159.6 507.5,140.0 515.5,125.7 525.2,117.6 533.3,112.8 544.0,110.0 545.0,109.5 547.0,112.0 549.0,109.5 552.0,107.0 554.0,108.5 557.0,112.0 559.0,109.0 562.0,108.5 564.0,108.5 566.0,110.0 568.0,109.5 570.0,110.0 573.0,109.0 576.0,110.5 578.0,110.0 581.0,108.5 583.0,110.5 585.0,109.5 587.0,109.5 589.0,110.5 591.0,110.0 593.0,109.5 595.0,110.0 597.0,110.0 599.0,109.0 599.5,110.6 602.0,130.0 604.5,152.0 607.5,175.7 612.4,201.5 618.9,221.0 623.0,228.0 628.6,234.0 634.0,237.0 635.0,236.0 637.0,236.0 639.0,235.5 642.0,236.0 644.0,236.5 646.0,236.5 648.0,235.5 650.0,237.5 652.0,236.5 654.0,237.5" stroke="#f0f070"/>
</g>
<path d="M15 112h8v1h-8zM32 112h8v1h-8zM49 112h8v1h-8zM66 112h8v1h-8zM83 112h8v1h-8zM100 112h8v1h-8zM117 112h8v1h-8zM134 112h8v1h-8zM151 112h8v1h-8zM168 112h8v1h-8zM185 112h8v1h-8zM202 112h8v1h-8zM219 112h8v1h-8zM236 112h8v1h-8zM253 112h8v1h-8zM270 112h8v1h-8zM287 112h8v1h-8zM304 112h8v1h-8zM321 112h8v1h-8zM338 112h8v1h-8zM355 112h8v1h-8zM372 112h8v1h-8zM389 112h8v1h-8zM406 112h8v1h-8zM423 112h8v1h-8zM440 112h8v1h-8zM457 112h8v1h-8zM474 112h8v1h-8zM491 112h8v1h-8zM508 112h8v1h-8zM525 112h8v1h-8zM542 112h8v1h-8zM559 112h8v1h-8zM576 112h8v1h-8zM593 112h8v1h-8zM610 112h8v1h-8zM627 112h8v1h-8zM15 238h8v1h-8zM32 238h8v1h-8zM49 238h8v1h-8zM66 238h8v1h-8zM83 238h8v1h-8zM100 238h8v1h-8zM117 238h8v1h-8zM134 238h8v1h-8zM151 238h8v1h-8zM168 238h8v1h-8zM185 238h8v1h-8zM202 238h8v1h-8zM219 238h8v1h-8zM236 238h8v1h-8zM253 238h8v1h-8zM270 238h8v1h-8zM287 238h8v1h-8zM304 238h8v1h-8zM321 238h8v1h-8zM338 238h8v1h-8zM355 238h8v1h-8zM372 238h8v1h-8zM389 238h8v1h-8zM406 238h8v1h-8zM423 238h8v1h-8zM440 238h8v1h-8zM457 238h8v1h-8zM474 238h8v1h-8zM491 238h8v1h-8zM508 238h8v1h-8zM525 238h8v1h-8zM542 238h8v1h-8zM559 238h8v1h-8zM576 238h8v1h-8zM593 238h8v1h-8zM610 238h8v1h-8zM627 238h8v1h-8z" fill="#fff"/>
<path d="M300 28.5H370V41.5L367 44.5H341L335.5 51.5L330 44.5H303L300 41.5Z" fill="#3f6ef2" stroke="#a8c4ff" stroke-width="1"/>
<text transform="translate(313 43) scale(0.88 1)" x="0" y="0" font-family="Liberation Sans" font-size="15.5" font-weight="normal" fill="#ffffff" opacity="0.995" textLength="51.70" lengthAdjust="spacing" stroke="#3f6ef2" stroke-width="0.25">0.000s</text>
<path d="M639.5 112.8L646 105.5H656V120H646Z" fill="#f4f4f4"/>
<text x="644.5" y="118" font-family="Liberation Sans" font-size="14.5" font-weight="bold" fill="#000" opacity="0.995" textLength="9.5" lengthAdjust="spacingAndGlyphs">E</text>
<path d="M642.5 155L656 147V163Z" fill="#f8f000"/>
<path d="M0 232H8L14.5 239L8 246.5H0Z" fill="#20e0f0"/>
<path d="M0 233H5L9 239L5 245H0Z" fill="#a0f050" opacity="0.7"/>
<text x="1" y="244" font-family="Liberation Sans" font-size="11" font-weight="normal" fill="#000" opacity="0.995" textLength="7.0" lengthAdjust="spacing">2</text>
<rect x="15.5" y="3.5" width="22" height="20" fill="#000" stroke="#c4c4dc"/>
<polyline points="17.0,6.3 17.5,6.1 18.0,6.2 18.5,6.4 19.0,6.8 19.5,7.4 20.0,8.1 20.5,8.8 21.0,9.5 21.5,10.2 22.0,10.8 22.5,11.2 23.0,11.4 23.5,11.5 24.0,11.3 24.5,11.0 25.0,10.5 25.5,9.9 26.0,9.2 26.5,8.4 27.0,7.7 27.5,7.1 28.0,6.6 28.5,6.3 29.0,6.1 29.5,6.2 30.0,6.4 30.5,6.8 31.0,7.4 31.5,8.1 32.0,8.8 32.5,9.5 33.0,10.2 33.5,10.8 34.0,11.2 34.5,11.4 35.0,11.5 35.5,11.3 36.0,11.0 36.5,10.5" fill="none" stroke="#f8f020" stroke-width="2.4"/>
<polyline points="17.0,15.9 17.5,15.3 18.0,15.0 18.5,14.8 19.0,14.9 19.5,15.1 20.0,15.6 20.5,16.2 21.0,17.0 21.5,17.8 22.0,18.6 22.5,19.4 23.0,20.0 23.5,20.5 24.0,20.7 24.5,20.8 25.0,20.6 25.5,20.3 26.0,19.7 26.5,19.0 27.0,18.2 27.5,17.4 28.0,16.6 28.5,15.9 29.0,15.3 29.5,15.0 30.0,14.8 30.5,14.9 31.0,15.1 31.5,15.6 32.0,16.2 32.5,17.0 33.0,17.8 33.5,18.6 34.0,19.4 34.5,20.0 35.0,20.5 35.5,20.7 36.0,20.8 36.5,20.6" fill="none" stroke="#20e0f0" stroke-width="2.4"/>
<rect x="40.5" y="3.5" width="22" height="20" fill="#000" stroke="#c4c4dc"/>
<line x1="44.5" y1="20" x2="59" y2="6" stroke="#28e028" stroke-width="2.2" stroke-linecap="round"/>
<rect x="65.5" y="3.5" width="22" height="20" fill="#000" stroke="#c4c4dc"/>
<path d="M68 21.5L67 14L70 11L72 6L77 4.5L81 5L85 8L85 13L82 15L81 21.5Z" fill="#88887e"/>
<path d="M70 20L70 15L73 12L75 8L79 7L82 9L80 13L78 16L77 20Z" fill="#a8a89c"/>
<path d="M73 18L74 14L77 11L79 13L76 17Z" fill="#6c6c64"/>
<path d="M91 23.5H132Q134.5 23.5 134.5 21V2.5" fill="none" stroke="#7c78b4" stroke-width="1.2"/>
<path d="M90.5 23V2.5H133" fill="none" stroke="#12107a" stroke-width="1.4"/>
<path d="M142 22.5H146.5V6.5H156V22.5H161.5" fill="none" stroke="#f0ffff" stroke-width="2"/>
<path d="M148 6V3M150.5 6V3M153 6V3M155.5 6V3M157 22V19M159.5 22V19M162 22V19M143 22V19" fill="none" stroke="#f0ffff" stroke-width="1"/>
<circle cx="174.5" cy="14" r="9.5" fill="#f81010"/>
<path d="M190 14.5H205" stroke="#4a4f4c" stroke-width="3"/><circle cx="207.5" cy="14.5" r="3.8" fill="#4a4f4c"/><path d="M193 15V19M197 15V18.5M201 15V19" stroke="#4a4f4c" stroke-width="2"/>
<path d="M216.5 3.5H236V22.5H219.5L216.5 19.5Z" fill="none" stroke="#c8c8f4" stroke-width="1.6"/>
<path d="M220 4V11.5H232.5V4" fill="none" stroke="#c8c8f4" stroke-width="1.6"/>
<rect x="220.5" y="15.5" width="11" height="7" fill="#c8c8f4"/><rect x="222.5" y="16.5" width="2.5" height="6" fill="#2a2498"/><rect x="226" y="16.5" width="5" height="5" fill="#f4f4ff"/>
<path d="M247 4H258V11M247 4V11M249 7H256M249 9.5H256" fill="none" stroke="#4a4f4c" stroke-width="1.6"/>
<path d="M244 12H262V20H244Z M246 16H260" fill="none" stroke="#4a4f4c" stroke-width="2"/>
<rect x="266" y="0" width="1" height="28" fill="#1a1470"/>
<rect x="273.5" y="3.5" width="21" height="21" fill="#000" stroke="#c8c0f0"/>
<text x="276.0" y="20.3" font-family="Liberation Sans" font-size="20" font-weight="bold" fill="#d8fff4" opacity="0.995" textLength="15.0" lengthAdjust="spacingAndGlyphs">M</text>
<rect x="300.0" y="4.0" width="99.0" height="20.5" rx="10.5" fill="#8a84c4"/>
<rect x="299.5" y="3.5" width="99.0" height="20.5" rx="10.5" fill="#000" stroke="#1e1878" stroke-width="1"/>
<text transform="translate(324 20.7) scale(0.9 1)" x="0" y="0" font-family="Liberation Sans" font-size="18.5" font-weight="normal" fill="#ffffff" opacity="0.995" textLength="54.44" lengthAdjust="spacing" stroke="#000" stroke-width="0.2">400ns</text>
<rect x="403.5" y="3.5" width="112" height="20.5" fill="#000" stroke="#8888c0"/>
<polyline points="405.0,19.5 407.0,8.5 409.0,19.5 411.0,8.5 413.0,19.5 415.0,8.5 417.0,19.5 419.0,8.5 421.0,19.5 423.0,8.5 425.0,19.5 427.0,8.5 429.0,19.5 431.0,8.5 433.0,19.5 435.0,8.5 437.0,19.5 439.0,8.5 441.0,19.5 443.0,8.5 445.0,19.5 447.0,8.5 449.0,19.5 451.0,8.5" fill="none" stroke="#185060" stroke-width="1"/>
<polyline points="465.0,19.5 467.0,8.5 469.0,19.5 471.0,8.5 473.0,19.5 475.0,8.5 477.0,19.5 479.0,8.5 481.0,19.5 483.0,8.5 485.0,19.5 487.0,8.5 489.0,19.5 491.0,8.5 493.0,19.5 495.0,8.5 497.0,19.5 499.0,8.5 501.0,19.5 503.0,8.5 505.0,19.5 507.0,8.5 509.0,19.5 511.0,8.5 513.0,19.5" fill="none" stroke="#185060" stroke-width="1"/>
<rect x="452" y="4.5" width="12" height="19" fill="#000" stroke="#f07028" stroke-width="2"/>
<polyline points="454.5,10.2 455.0,13.5 455.5,16.8 456.0,19.1 456.5,20.0 457.0,19.1 457.5,16.8 458.0,13.5 458.5,10.2 459.0,7.9 459.5,7.0 460.0,7.9 460.5,10.2 461.0,13.5 461.5,16.7 462.0,19.1 462.5,20.0 463.0,19.1 463.5,16.8" fill="none" stroke="#40e8ff" stroke-width="2"/>
<rect x="521.5" y="3.5" width="21" height="21" fill="#000" stroke="#c8c0f0"/>
<text x="523.5" y="20.3" font-family="Liberation Sans" font-size="20" font-weight="bold" fill="#d8fff4" opacity="0.995" textLength="17.5" lengthAdjust="spacingAndGlyphs">W</text>
<rect x="547.0" y="4.0" width="99.5" height="20.5" rx="10.5" fill="#8a84c4"/>
<rect x="546.5" y="3.5" width="99.5" height="20.5" rx="10.5" fill="#000" stroke="#1e1878" stroke-width="1"/>
<text transform="translate(569 21) scale(0.9 1)" x="0" y="0" font-family="Liberation Sans" font-size="18.5" font-weight="normal" fill="#ffffff" opacity="0.995" textLength="61.11" lengthAdjust="spacing" stroke="#000" stroke-width="0.2">80.0ns</text>
<rect x="15.5" y="456.5" width="18" height="2.2" fill="#f0f050"/>
<path d="M15.5 460.5h3M20.5 460.5h3M25.5 460.5h3M30.5 460.5h3" stroke="#e8e8a0" stroke-width="1.2"/>
<text x="16.0" y="473" font-family="Liberation Sans" font-size="12" font-weight="bold" fill="#e8e8a0" opacity="0.995" textLength="16.5" lengthAdjust="spacingAndGlyphs">DC</text>
<circle cx="49" cy="464.5" r="8.4" fill="none" stroke="#4b4a66" stroke-width="2.4"/>
<text x="43" y="469.5" font-family="Liberation Sans" font-size="12" font-weight="bold" fill="#464566" opacity="0.995" textLength="12.0" lengthAdjust="spacingAndGlyphs">20</text>
<path d="M64 462.5h2v-5h5v5h4v-5h5v5h2" fill="none" stroke="#f0f050" stroke-width="1.8" stroke-linejoin="round"/>
<path d="M64 466.5h2v5h5v-5h4v5h5v-5h2" fill="none" stroke="#9090c0" stroke-width="1.3"/>
<rect x="87.4" y="453.3" width="82.1" height="22.099999999999966" rx="11.299999999999983" fill="#8a84c4"/>
<rect x="86.9" y="452.8" width="82.1" height="22.099999999999966" rx="11.299999999999983" fill="#000" stroke="#1e1878" stroke-width="1"/>
<text transform="translate(104.5 471.6) scale(0.85 1)" x="0" y="0" font-family="Liberation Sans" font-size="17.5" font-weight="normal" fill="#f0f050" opacity="0.995" textLength="54.71" lengthAdjust="spacing" stroke="#000" stroke-width="0.25">2.00V</text>
<rect x="172" y="450" width="1.2" height="30" fill="#161070"/>
<rect x="175.8" y="456.5" width="18" height="2.2" fill="#40d8f0"/>
<path d="M175.8 460.5h3M180.8 460.5h3M185.8 460.5h3M190.8 460.5h3" stroke="#60d8f0" stroke-width="1.2"/>
<text x="176.3" y="473" font-family="Liberation Sans" font-size="12" font-weight="bold" fill="#60d8f0" opacity="0.995" textLength="16.5" lengthAdjust="spacingAndGlyphs">DC</text>
<circle cx="209" cy="464.5" r="8.4" fill="none" stroke="#4b4a66" stroke-width="2.4"/>
<text x="203" y="469.5" font-family="Liberation Sans" font-size="12" font-weight="bold" fill="#464566" opacity="0.995" textLength="12.0" lengthAdjust="spacingAndGlyphs">20</text>
<path d="M225.5 462.5h2v-5h5v5h4v-5h5v5h2" fill="none" stroke="#40d8f0" stroke-width="1.8" stroke-linejoin="round"/>
<path d="M225.5 466.5h2v5h5v-5h4v5h5v-5h2" fill="none" stroke="#9090c0" stroke-width="1.3"/>
<rect x="247.4" y="453.3" width="82.1" height="22.099999999999966" rx="11.299999999999983" fill="#8a84c4"/>
<rect x="246.9" y="452.8" width="82.1" height="22.099999999999966" rx="11.299999999999983" fill="#000" stroke="#1e1878" stroke-width="1"/>
<text transform="translate(264.5 471.6) scale(0.85 1)" x="0" y="0" font-family="Liberation Sans" font-size="17.5" font-weight="normal" fill="#48e0d8" opacity="0.995" textLength="54.71" lengthAdjust="spacing" stroke="#000" stroke-width="0.25">2.00V</text>
<rect x="332" y="450" width="1.2" height="30" fill="#161070"/>
<text transform="translate(353 471.5) scale(0.8 1)" x="0" y="0" font-family="Liberation Sans" font-size="17.5" font-weight="normal" fill="#f0f050" opacity="0.995" textLength="32.50" lengthAdjust="spacingAndGlyphs" stroke="#37309e" stroke-width="0.25">CH1</text>
<path d="M385.5 472.5H391.5L397 457H402.5" fill="none" stroke="#d8ecff" stroke-width="1.8"/>
<rect x="405.7" y="453.3" width="77.30000000000001" height="22.099999999999966" rx="11.299999999999983" fill="#8a84c4"/>
<rect x="405.2" y="452.8" width="77.30000000000001" height="22.099999999999966" rx="11.299999999999983" fill="#000" stroke="#1e1878" stroke-width="1"/>
<text transform="translate(420.5 470.8) scale(0.85 1)" x="0" y="0" font-family="Liberation Sans" font-size="17.5" font-weight="normal" fill="#f0f050" opacity="0.995" textLength="54.71" lengthAdjust="spacing" stroke="#000" stroke-width="0.25">3.36V</text>
<rect x="502" y="450" width="1.2" height="30" fill="#161070"/>
<rect x="513.5" y="453.5" width="130.0" height="21.899999999999977" rx="11.199999999999989" fill="#8a84c4"/>
<rect x="513" y="453" width="130.0" height="21.899999999999977" rx="11.199999999999989" fill="#000" stroke="#1e1878" stroke-width="1"/>
<text transform="translate(529 470.7) scale(0.85 1)" x="0" y="0" font-family="Liberation Sans" font-size="17.5" font-weight="normal" fill="#f0f050" opacity="0.995" textLength="114.12" lengthAdjust="spacing" stroke="#000" stroke-width="0.25">2.55696MHz</text>
<rect x="656" y="0" width="144" height="480" fill="#3865fd"/>
<rect x="656" y="0" width="144" height="28" fill="#0632ac"/>
<rect x="656" y="0" width="144" height="1" fill="#4a6cf0"/>
<rect x="656" y="0" width="1.2" height="258" fill="#a4b8ff"/>
<text x="686" y="21.2" font-family="Liberation Sans" font-size="21" font-weight="normal" fill="#ffffff" opacity="0.995" textLength="63.0" lengthAdjust="spacingAndGlyphs">Cursor</text>
<rect x="777" y="3.2" width="21" height="21" fill="#f03c10"/>
<path d="M781.5 6.8L793.8 19.8M793.8 6.8L781.5 19.8" stroke="#fff" stroke-width="2.6" stroke-linecap="round"/>
<path d="M707 38.5H667.5L662.5 43.5V128.5L665.5 131.5H801 M758 38.5H801" fill="none" stroke="#0e2c9c" stroke-width="1"/>
<path d="M707 39.5H668L663.5 44V128L666 132.5H801 M758 39.5H801" fill="none" stroke="#7090ff" stroke-width="1" opacity="0.6"/>
<path d="M700 143.5H667.5L662.5 148.5V253.5L665.5 256.5H801 M766 143.5H801" fill="none" stroke="#0e2c9c" stroke-width="1"/>
<path d="M700 144.5H668L663.5 149V253L666 257.5H801 M766 144.5H801" fill="none" stroke="#7090ff" stroke-width="1" opacity="0.6"/>
<text transform="translate(714.5 43.6) scale(0.82 1)" x="0" y="0" font-family="Liberation Sans" font-size="17.5" font-weight="normal" fill="#d8f8ff" opacity="0.995" textLength="46.95" lengthAdjust="spacing">Type</text>
<circle cx="671.5" cy="58.8" r="6.2" fill="none" stroke="#d8f8ff" stroke-width="1.1"/>
<text transform="translate(682 65) scale(0.82 1)" x="0" y="0" font-family="Liberation Sans" font-size="17.5" font-weight="normal" fill="#d8f8ff" opacity="0.995" textLength="34.15" lengthAdjust="spacing">Off</text>
<circle cx="671.5" cy="80" r="6.2" fill="none" stroke="#d8f8ff" stroke-width="1.1"/>
<text transform="translate(683 85.8) scale(0.82 1)" x="0" y="0" font-family="Liberation Sans" font-size="17.5" font-weight="normal" fill="#d8f8ff" opacity="0.995" textLength="45.12" lengthAdjust="spacing">Time</text>
<circle cx="671.5" cy="101.5" r="6.2" fill="none" stroke="#f0944c" stroke-width="1.1"/>
<circle cx="671.5" cy="101.5" r="1.8" fill="#f0944c"/>
<text transform="translate(682 107.6) scale(0.82 1)" x="0" y="0" font-family="Liberation Sans" font-size="17.5" font-weight="normal" fill="#f0944c" opacity="0.995" textLength="76.22" lengthAdjust="spacing">Voltage</text>
<circle cx="671.5" cy="121.5" r="6.2" fill="none" stroke="#d8f8ff" stroke-width="1.1"/>
<text transform="translate(683 127.6) scale(0.82 1)" x="0" y="0" font-family="Liberation Sans" font-size="17.5" font-weight="normal" fill="#d8f8ff" opacity="0.995" textLength="53.05" lengthAdjust="spacing">Track</text>
<text transform="translate(704.5 148.8) scale(0.82 1)" x="0" y="0" font-family="Liberation Sans" font-size="17.5" font-weight="normal" fill="#d8f8ff" opacity="0.995" textLength="70.12" lengthAdjust="spacing">Source</text>
<circle cx="671.5" cy="163" r="6.2" fill="none" stroke="#d8f8ff" stroke-width="1.1"/>
<text transform="translate(682 169) scale(0.82 1)" x="0" y="0" font-family="Liberation Sans" font-size="17.5" font-weight="normal" fill="#d8f8ff" opacity="0.995" textLength="32.93" lengthAdjust="spacingAndGlyphs">CH1</text>
<circle cx="671.5" cy="183" r="6.2" fill="none" stroke="#e47454" stroke-width="1.1"/>
<circle cx="671.5" cy="183" r="1.8" fill="#e47454"/>
<text transform="translate(682 189) scale(0.82 1)" x="0" y="0" font-family="Liberation Sans" font-size="17.5" font-weight="normal" fill="#e47454" opacity="0.995" textLength="35.37" lengthAdjust="spacing">CH2</text>
<circle cx="671.5" cy="203.5" r="6.2" fill="none" stroke="#d8f8ff" stroke-width="1.1"/>
<text transform="translate(682 209.6) scale(0.82 1)" x="0" y="0" font-family="Liberation Sans" font-size="17.5" font-weight="normal" fill="#d8f8ff" opacity="0.995" textLength="104.88" lengthAdjust="spacing">MATH(off)</text>
<circle cx="671.5" cy="223.8" r="6.2" fill="none" stroke="#d8f8ff" stroke-width="1.1"/>
<text transform="translate(682 229.8) scale(0.82 1)" x="0" y="0" font-family="Liberation Sans" font-size="17.5" font-weight="normal" fill="#d8f8ff" opacity="0.995" textLength="104.88" lengthAdjust="spacing">RefA(off)</text>
<circle cx="671.5" cy="244.2" r="6.2" fill="none" stroke="#d8f8ff" stroke-width="1.1"/>
<text transform="translate(682 250.2) scale(0.82 1)" x="0" y="0" font-family="Liberation Sans" font-size="17.5" font-weight="normal" fill="#d8f8ff" opacity="0.995" textLength="104.88" lengthAdjust="spacing">RefB(off)</text>
<path d="M788 173.5L792 165.5L796.5 173.5Z" fill="#18d038"/>
<path d="M788 245.5L792 251.8L796.5 245.5Z" fill="#18d038"/>
<path d="M675 268.5H668Q663.5 268.5 663.5 273V376Q663.5 380.5 668 380.5H801" fill="none" stroke="#c8784e" stroke-width="1.3"/>
<rect x="670" y="260" width="126.5" height="19" rx="9.5" fill="#f06818"/>
<text transform="translate(675.5 274.6) scale(0.82 1)" x="0" y="0" font-family="Liberation Sans" font-size="17.5" font-weight="normal" fill="#fff4dc" opacity="0.995" textLength="140.85" lengthAdjust="spacing">Select cursor</text>
<circle cx="671.5" cy="304.3" r="6.2" fill="none" stroke="#d8f8ff" stroke-width="1.1"/>
<text transform="translate(682 310.6) scale(0.82 1)" x="0" y="0" font-family="Liberation Sans" font-size="17.5" font-weight="normal" fill="#d8f8ff" opacity="0.995" textLength="12.20" lengthAdjust="spacing">S</text>
<rect x="700.8" y="286.8" width="89" height="19" rx="4" fill="none" stroke="#7088d8" stroke-width="1.6"/>
<text transform="translate(722.5 303.5) scale(0.85 1)" x="0" y="0" font-family="Liberation Sans" font-size="17.5" font-weight="normal" fill="#d8f8ff" opacity="0.995" textLength="52.94" lengthAdjust="spacing">0.00V</text>
<circle cx="671.5" cy="357" r="6.2" fill="none" stroke="#f0944c" stroke-width="1.1"/>
<circle cx="671.5" cy="357" r="1.8" fill="#f0944c"/>
<text transform="translate(682 363.6) scale(0.82 1)" x="0" y="0" font-family="Liberation Sans" font-size="17.5" font-weight="normal" fill="#f0944c" opacity="0.995" textLength="12.20" lengthAdjust="spacing">E</text>
<rect x="700.8" y="334.8" width="89" height="19" rx="4" fill="none" stroke="#c8784e" stroke-width="1.6"/>
<text transform="translate(721.5 351.8) scale(0.85 1)" x="0" y="0" font-family="Liberation Sans" font-size="17.5" font-weight="normal" fill="#f0944c" opacity="0.995" textLength="55.29" lengthAdjust="spacing">5.04V</text>
<text transform="translate(670 422.3) scale(0.85 1)" x="0" y="0" font-family="Liberation Sans" font-size="17.5" font-weight="normal" fill="#d8f8ff" opacity="0.995" textLength="24.12" lengthAdjust="spacing">dV</text>
<rect x="710.8" y="403.3" width="78.5" height="23.5" rx="4" fill="none" stroke="#7088d8" stroke-width="1.6"/>
<text transform="translate(727 422.3) scale(0.85 1)" x="0" y="0" font-family="Liberation Sans" font-size="17.5" font-weight="normal" fill="#d8f8ff" opacity="0.995" textLength="54.71" lengthAdjust="spacing">5.04V</text>
</svg>
</body></html>
